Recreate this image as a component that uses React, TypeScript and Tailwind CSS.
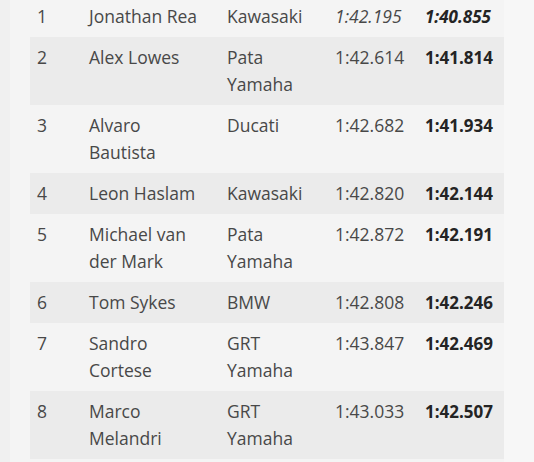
import React from "react";

type Row = {
  pos: string;
  name: string[];
  team: string[];
  time: string;
  best: string;
  italic?: boolean;
};

const rows: Row[] = [
  { pos: "1", name: ["Jonathan Rea"], team: ["Kawasaki"], time: "1:42.195", best: "1:40.855", italic: true },
  { pos: "2", name: ["Alex Lowes"], team: ["Pata", "Yamaha"], time: "1:42.614", best: "1:41.814" },
  { pos: "3", name: ["Alvaro", "Bautista"], team: ["Ducati"], time: "1:42.682", best: "1:41.934" },
  { pos: "4", name: ["Leon Haslam"], team: ["Kawasaki"], time: "1:42.820", best: "1:42.144" },
  { pos: "5", name: ["Michael van", "der Mark"], team: ["Pata", "Yamaha"], time: "1:42.872", best: "1:42.191" },
  { pos: "6", name: ["Tom Sykes"], team: ["BMW"], time: "1:42.808", best: "1:42.246" },
  { pos: "7", name: ["Sandro", "Cortese"], team: ["GRT", "Yamaha"], time: "1:43.847", best: "1:42.469" },
  { pos: "8", name: ["Marco", "Melandri"], team: ["GRT", "Yamaha"], time: "1:43.033", best: "1:42.507" },
];

function Lines({ lines }: { lines: string[] }) {
  return (
    <>
      {lines.map((l, i) => (
        <div key={i} className="whitespace-nowrap">
          {l}
        </div>
      ))}
    </>
  );
}

export default function App() {
  return (
    <div
      className="w-[534px] h-[462px] overflow-hidden bg-[#f4f4f4] flex text-[#484848] text-[17.5px] leading-[27px]"
      style={{ fontFamily: '"Open Sans", "Noto Sans", sans-serif' }}
    >
      <div className="w-[10px] bg-[#f0f0f0] shrink-0" />
      <div className="w-[20px] shrink-0" />
      <div className="w-[474px] shrink-0 -mt-[4.5px]">
        {rows.map((r, i) => (
          <div
            key={r.pos}
            className={`flex ${i % 2 === 1 ? "bg-[#ebebeb]" : ""}`}
          >
            <div className="w-[52px] pl-[7px] py-[7px]">{r.pos}</div>
            <div className="w-[138px] pl-[7px] py-[7px]">
              <Lines lines={r.name} />
            </div>
            <div className="w-[108px] pl-[7px] py-[7px]">
              <Lines lines={r.team} />
            </div>
            <div className={`w-[90px] pl-[7px] py-[7px] whitespace-nowrap ${r.italic ? "italic" : ""}`}>
              {r.time}
            </div>
            <div
              className={`w-[86px] pl-[7px] py-[7px] whitespace-nowrap font-bold text-[17px] text-[#242424] ${r.italic ? "italic" : ""}`}
            >
              {r.best}
            </div>
          </div>
        ))}
      </div>
      <div className="flex-1 bg-[#f7f7f7]" />
    </div>
  );
}
